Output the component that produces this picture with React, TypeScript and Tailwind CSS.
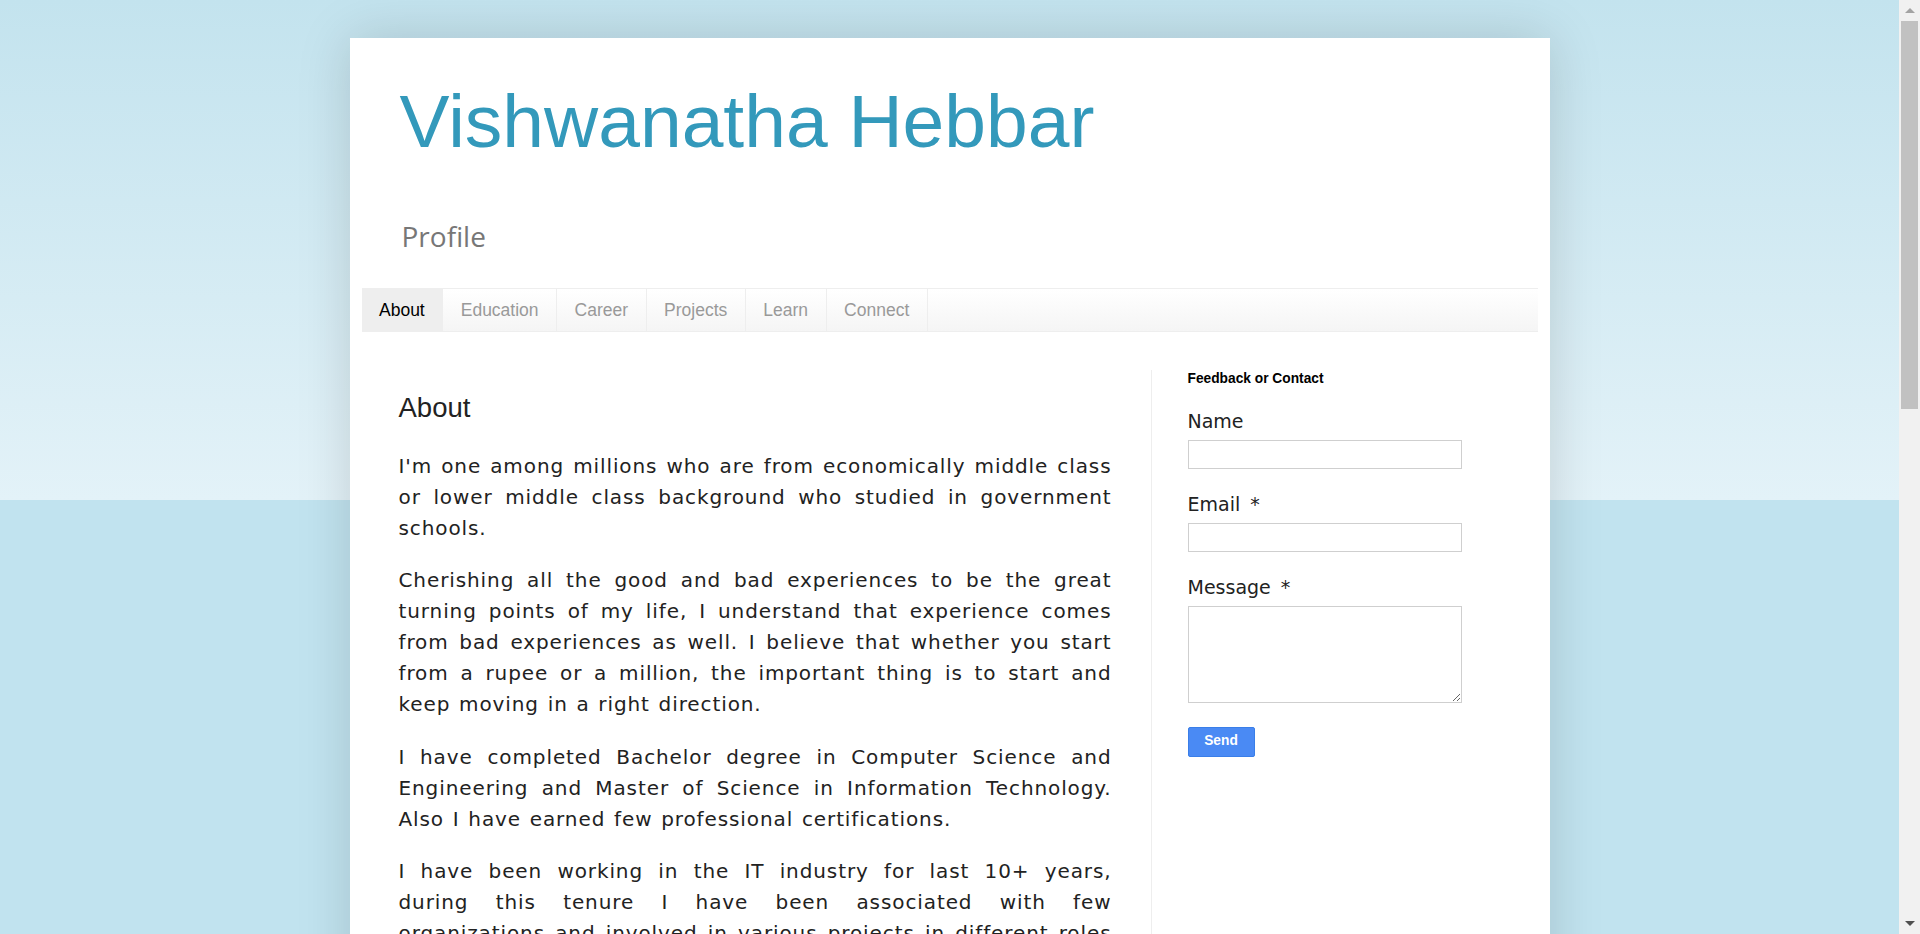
import React from 'react'

const tabs = ['About', 'Education', 'Career', 'Projects', 'Learn', 'Connect']

const paragraphs = [
  "I'm one among millions who are from economically middle class or lower middle class background who studied in government schools.",
  'Cherishing all the good and bad experiences to be the great turning points of my life, I understand that experience comes from bad experiences as well. I believe that whether you start from a rupee or a million, the important thing is to start and keep moving in a right direction.',
  'I have completed Bachelor degree in Computer Science and Engineering and Master of Science in Information Technology. Also I have earned few professional certifications.',
  'I have been working in the IT industry for last 10+ years, during this tenure I have been associated with few organizations and involved in various projects in different roles and responsibilities, which helped me to learn a lot.',
  'This blog is a small effort to share what I have learnt over the years with everyone who is interested.',
]

function Field({ label, required, area }: { label: string; required?: boolean; area?: boolean }) {
  return (
    <div className="mb-[24px]">
      <label className="block text-[19px] leading-[22px] text-[#222] mb-[8px] font-['DejaVu_Sans',sans-serif]">
        {label}
        {required && <span className="ml-[10px]">*</span>}
      </label>
      {area ? (
        <textarea className="block w-[274px] h-[97px] border border-[#cfcfcf] bg-white outline-none" />
      ) : (
        <input className="block w-[274px] h-[29px] border border-[#cfcfcf] bg-white outline-none" />
      )}
    </div>
  )
}

// windows style scrollbar, drawn because the headless browser hides its own
function Scrollbar() {
  return (
    <div className="fixed right-0 top-0 h-screen w-[21px] bg-[#f1f1f1] flex flex-col items-center">
      <div className="h-[21px] flex items-center justify-center">
        <div className="w-0 h-0 border-x-[5px] border-x-transparent border-b-[5px] border-b-[#a3a3a3]" />
      </div>
      <div className="w-[17px] h-[388px] bg-[#c1c1c1]" />
      <div className="flex-1" />
      <div className="h-[21px] flex items-center justify-center">
        <div className="w-0 h-0 border-x-[5px] border-x-transparent border-t-[5px] border-t-[#505050]" />
      </div>
    </div>
  )
}

export default function App() {
  return (
    <div className="min-h-screen bg-[#c1e3ef] bg-[linear-gradient(#c3e3ee,#e3f2f8)] bg-no-repeat bg-[length:100%_500px] pt-[38px] pr-[21px]">
      <div className="mx-auto w-[1200px] bg-white shadow-[0_0_50px_rgba(0,0,0,0.15)] pb-10">
        {/* Header */}
        <header className="pl-[50px] pt-[46px]">
          <h1 className="text-[75px] leading-none text-[#3399bb] font-['Liberation_Sans',Arial,sans-serif]">
            Vishwanatha Hebbar
          </h1>
          <p className="mt-[63px] text-[28px] leading-none text-[#777] font-['Open_Sans',sans-serif] pl-[2px]">
            Profile
          </p>
        </header>

        {/* Tabs */}
        <nav className="mx-[12px] mt-[38px] border-y border-[#eee] bg-[linear-gradient(#ffffff,#f5f5f5)]">
          <ul className="flex h-[42px] font-['Liberation_Sans',Arial,sans-serif] text-[17.5px]">
            {tabs.map((t, i) => (
              <li
                key={t}
                className={
                  'flex items-center px-[17.5px] border-r border-[#eee] ' +
                  (i === 0 ? 'bg-[#eee] text-black' : 'text-[#999]')
                }
              >
                {t}
              </li>
            ))}
          </ul>
        </nav>

        {/* Body */}
        <div className="mx-[12px] mt-[38px] flex">
          <main className="w-[789px] pl-[37px] pr-[39px]">
            <h3 className="mt-[24px] text-[27.5px] leading-none text-[#222] font-['Liberation_Sans',Arial,sans-serif]">
              About
            </h3>
            <div className="mt-[29px] text-[20px] leading-[31px] tracking-[0.9px] [word-spacing:1.5px] text-[#222] text-justify font-['DejaVu_Sans',sans-serif]">
              {paragraphs.map((p, i) => (
                <p key={i} className="mb-[21.5px]">
                  {p}
                </p>
              ))}
            </div>
          </main>

          <aside className="flex-1 border-l border-[#eee] pl-[36px] pt-[2px] min-h-[600px]">
            <h2 className="text-[13.75px] leading-none font-bold text-black mb-[24px] font-['Liberation_Sans',Arial,sans-serif]">
              Feedback or Contact
            </h2>
            <Field label="Name" />
            <Field label="Email" required />
            <Field label="Message" required area />
            <button className="w-[67px] h-[30px] rounded-[2px] border border-[#3a7ee8] bg-[#4a8af4] text-white text-[13.75px] font-bold font-['Liberation_Sans',Arial,sans-serif]">
              Send
            </button>
          </aside>
        </div>
      </div>
      <Scrollbar />
    </div>
  )
}
